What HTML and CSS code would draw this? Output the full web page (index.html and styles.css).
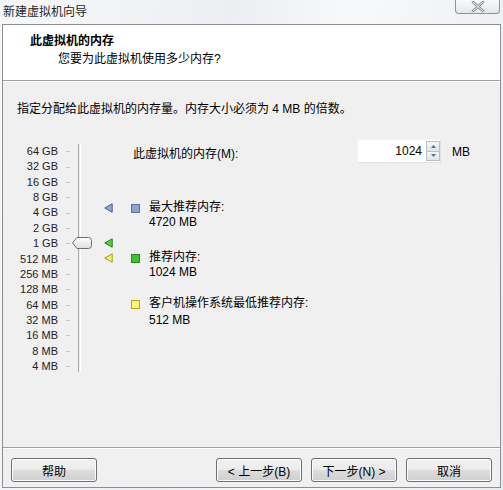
FILE: index.html
```html
<!DOCTYPE html>
<html lang="zh-CN">
<head>
    <meta charset="UTF-8">
    <title>新建虚拟机向导</title>
    <link rel="stylesheet" href="styles.css">
</head>
<body>

<div class="window">
    <div class="titlebar">
        <span class="title">新建虚拟机向导</span>
        <div class="close">
            <svg width="14" height="11" viewBox="0 0 14 11">
                <path d="M2 1 L12 10 M12 1 L2 10" stroke="#8a8f96" stroke-width="2.6" stroke-linecap="round"/>
                <path d="M2 1 L12 10 M12 1 L2 10" stroke="#f4f4f4" stroke-width="1" stroke-linecap="round"/>
            </svg>
        </div>
    </div>

    <div class="frame">
        <div class="header">
            <div class="head-title">此虚拟机的内存</div>
            <div class="head-sub">您要为此虚拟机使用多少内存?</div>
        </div>

        <div class="content">
            <p class="intro">指定分配给此虚拟机的内存量。内存大小必须为 4 MB 的倍数。</p>

            <div class="memory">
                <div class="scale">
                    <div class="labels">
                        <span>64 GB</span><span>32 GB</span><span>16 GB</span><span>8 GB</span>
                        <span>4 GB</span><span>2 GB</span><span>1 GB</span><span>512 MB</span>
                        <span>256 MB</span><span>128 MB</span><span>64 MB</span><span>32 MB</span>
                        <span>16 MB</span><span>8 MB</span><span>4 MB</span>
                    </div>
                    <div class="ticks">
                        <i></i><i></i><i></i><i></i><i></i><i></i><i></i><i></i>
                        <i></i><i></i><i></i><i></i><i></i><i></i><i></i>
                    </div>
                    <div class="track"></div>

                    <svg class="thumb" width="20" height="12" viewBox="0 0 20 12">
                        <defs>
                            <linearGradient id="tg" x1="0" y1="0" x2="0" y2="1">
                                <stop offset="0" stop-color="#ffffff"/>
                                <stop offset="1" stop-color="#dcdcdc"/>
                            </linearGradient>
                        </defs>
                        <path d="M0.5 6 L5 0.5 H16.5 Q19.5 0.5 19.5 3.5 V8.5 Q19.5 11.5 16.5 11.5 H5 Z" fill="url(#tg)" stroke="#6e6e6e"/>
                    </svg>

                    <svg class="pin pin-max" width="9" height="10" viewBox="0 0 9 10">
                        <path d="M0.8 5 L8.2 0.8 V9.2 Z" fill="#8eaad2" stroke="#3d5f93" stroke-linejoin="round"/>
                    </svg>
                    <svg class="pin pin-rec" width="9" height="10" viewBox="0 0 9 10">
                        <path d="M0.8 5 L8.2 0.8 V9.2 Z" fill="#5ccd44" stroke="#23801a" stroke-linejoin="round"/>
                    </svg>
                    <svg class="pin pin-min" width="9" height="10" viewBox="0 0 9 10">
                        <path d="M0.8 5 L8.2 0.8 V9.2 Z" fill="#fbf07a" stroke="#a89a10" stroke-linejoin="round"/>
                    </svg>
                </div>

                <div class="info">
                    <div class="size-row">
                        <span>此虚拟机的内存(M):</span>
                        <div class="spin">
                            <span class="spin-value">1024</span>
                            <div class="spin-btns">
                                <div class="spin-btn">
                                    <svg width="5" height="3" viewBox="0 0 5 3"><path d="M0 3 L2.5 0 L5 3 Z" fill="#5b6b7d"/></svg>
                                </div>
                                <div class="spin-btn">
                                    <svg width="5" height="3" viewBox="0 0 5 3"><path d="M0 0 L2.5 3 L5 0 Z" fill="#5b6b7d"/></svg>
                                </div>
                            </div>
                        </div>
                        <span class="unit">MB</span>
                    </div>

                    <div class="item item-max">
                        <i class="swatch blue"></i>
                        <div>
                            <div>最大推荐内存:</div>
                            <div>4720 MB</div>
                        </div>
                    </div>
                    <div class="item item-rec">
                        <i class="swatch green"></i>
                        <div>
                            <div>推荐内存:</div>
                            <div>1024 MB</div>
                        </div>
                    </div>
                    <div class="item item-min">
                        <i class="swatch yellow"></i>
                        <div>
                            <div>客户机操作系统最低推荐内存:</div>
                            <div class="last">512 MB</div>
                        </div>
                    </div>
                </div>
            </div>
        </div>

        <div class="footer">
            <button>帮助</button>
            <div class="nav">
                <button>&lt; 上一步(B)</button>
                <button>下一步(N) &gt;</button>
                <button>取消</button>
            </div>
        </div>
    </div>
</div>

</body>
</html>
```

FILE: styles.css
```css
body {
    margin: 0;
    font-family: "Liberation Sans", "Noto Sans CJK SC", sans-serif;
    font-size: 12px;
    color: #000;
}
.window {
    width: 503px;
    height: 490px;
    background: linear-gradient(100deg, #f7f8fa 0%, #eceef1 40%, #f8f9fb 60%, #e9ebee 100%);
    display: flex;
    flex-direction: column;
}
.titlebar {
    height: 24px;
    display: flex;
    justify-content: space-between;
    align-items: flex-start;
}
.title {
    padding: 4px 0 0 3px;
    line-height: 16px;
    color: #1e1e1e;
}
.close {
    width: 43px;
    height: 14px;
    margin: -1px 3px 0 0;
    border: 1px solid #8b939e;
    border-top: none;
    border-radius: 0 0 4px 4px;
    background: linear-gradient(#fafbfc, #e4e7eb);
    display: flex;
    justify-content: center;
    align-items: center;
}
.frame {
    margin: 0 2px 2px 2px;
    flex: 1;
    border: 1px solid #8d8e90;
    background: #f0f0f0;
    display: flex;
    flex-direction: column;
}
.header {
    height: 56px;
    background: #fff;
    border-bottom: 1px solid #a0a0a0;
    box-shadow: 0 1px 0 #fff;
    padding: 8px 0 0 27px;
    box-sizing: border-box;
}
.head-title {
    font-weight: bold;
    line-height: 17px;
}
.head-sub {
    padding: 1px 0 0 28px;
    line-height: 17px;
}
.content {
    flex: 1;
    padding: 0 0 0 14px;
}
.intro {
    margin: 20px 0 26px 0;
    line-height: 17px;
}
.memory {
    display: flex;
}
.scale {
    position: relative;
    width: 114px;
    height: 232px;
    display: flex;
}
.labels {
    width: 41px;
    display: flex;
    flex-direction: column;
    align-items: flex-end;
    font-size: 11px;
    color: #222;
}
.labels span {
    height: 15.36px;
    line-height: 15.36px;
    white-space: nowrap;
}
.ticks {
    margin-left: 8px;
    display: flex;
    flex-direction: column;
}
.ticks i {
    height: 15.36px;
    width: 4px;
    background: linear-gradient(#c4c4c4, #c4c4c4) center / 4px 1px no-repeat;
}
.track {
    margin: 0 0 4px 8px;
    width: 1px;
    border-left: 1px solid #a8a8a8;
    border-right: 1px solid #fff;
}
.thumb {
    position: absolute;
    left: 55px;
    top: 93px;
}
.pin {
    position: absolute;
    left: 87px;
}
.pin-max { top: 59px; }
.pin-rec { top: 94px; }
.pin-min { top: 109px; }
.info {
    width: 339px;
}
.size-row {
    display: flex;
    align-items: center;
    height: 16px;
    padding-left: 2px;
}
.size-row > span:first-child {
    flex: 1;
}
.spin {
    display: flex;
    height: 22px;
    margin-top: -2px;
    background: #fff;
    border: 1px solid #e2e2e2;
    border-left-color: #f5f5f5;
    border-top-color: #f5f5f5;
}
.spin-value {
    width: 64px;
    text-align: right;
    padding-right: 4px;
    line-height: 22px;
    font-size: 12px;
}
.spin-btns {
    width: 14px;
    display: flex;
    flex-direction: column;
    padding: 1px 0;
}
.spin-btn {
    flex: 1;
    border: 1px solid #b9c1ca;
    background: linear-gradient(#f6f7f9, #dfe3e8);
    display: flex;
    justify-content: center;
    align-items: center;
}
.spin-btn + .spin-btn {
    border-top: none;
}
.unit {
    margin-left: 11px;
}
.item {
    display: flex;
    line-height: 15px;
}
.item-max { margin-top: 40px; }
.item-rec { margin-top: 20px; }
.item-min { margin-top: 16px; }
.item .last { margin-top: 2px; }
.swatch {
    width: 7px;
    height: 7px;
    margin: 4px 9px 0 0;
    border: 1px solid;
}
.swatch.blue { background: #8aa8cf; border-color: #54739e; }
.swatch.green { background: #3fc035; border-color: #2b8a22; }
.swatch.yellow { background: #fff27a; border-color: #b9a511; }
.footer {
    height: 40px;
    border-top: 1px solid #a0a0a0;
    box-shadow: inset 0 1px 0 #fff;
    display: flex;
    justify-content: space-between;
    align-items: flex-start;
    padding: 10px 8px 0 8px;
    box-sizing: border-box;
}
.nav {
    display: flex;
    gap: 9px;
}
button {
    width: 86px;
    height: 24px;
    font-family: "Liberation Sans", "Noto Sans CJK SC", sans-serif;
    font-size: 12px;
    color: #000;
    border: 1px solid #707070;
    border-radius: 3px;
    background: linear-gradient(#f2f2f2 0%, #ebebeb 50%, #dddddd 51%, #cfcfcf 100%);
    box-shadow: inset 0 0 0 1px #fcfcfc;
    padding: 0;
}
```
